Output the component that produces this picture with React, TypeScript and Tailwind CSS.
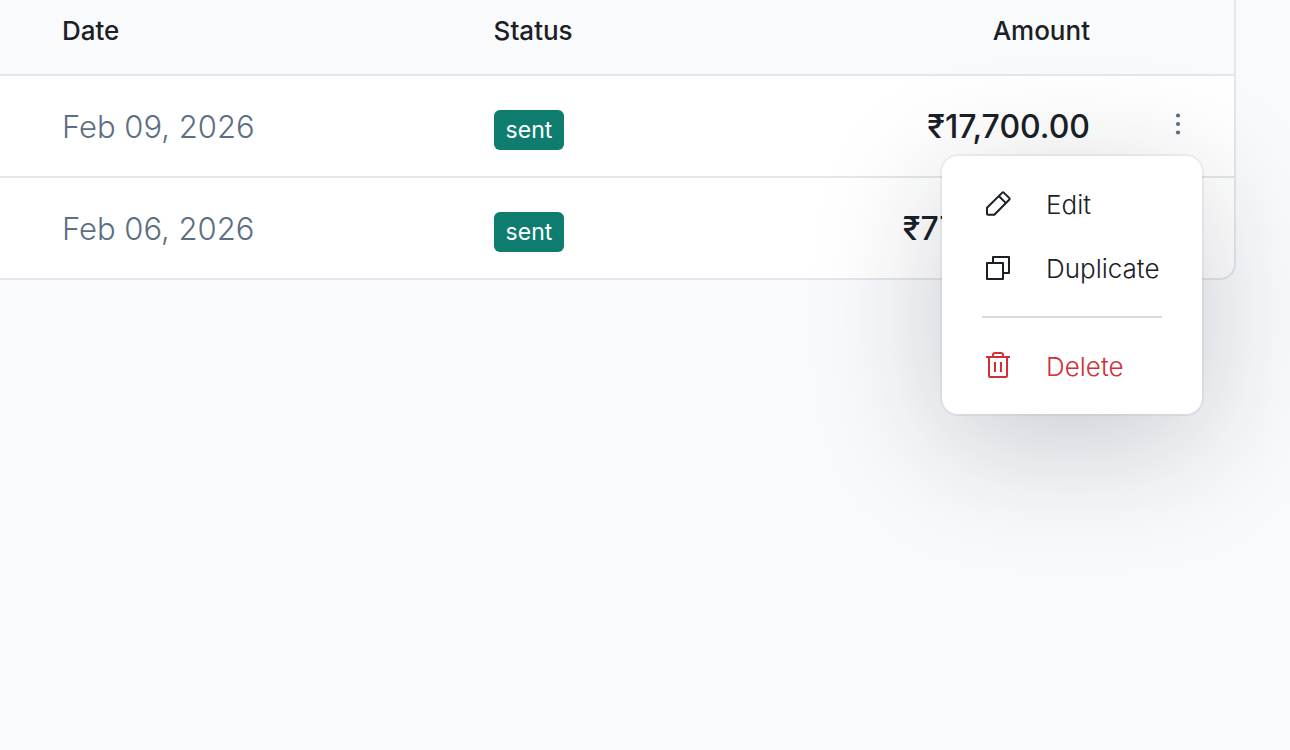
import React, { useState } from 'react';

interface Invoice {
  id: number;
  date: string;
  status: string;
  amount: string;
}

const invoices: Invoice[] = [
  { id: 1, date: 'Feb 09, 2026', status: 'sent', amount: '₹17,700.00' },
  { id: 2, date: 'Feb 06, 2026', status: 'sent', amount: '₹777,700.00' },
];

function PencilIcon() {
  return (
    <svg viewBox="0 0 32 32" className="size-8" fill="none" stroke="currentColor" strokeWidth="2" strokeLinejoin="round" aria-hidden="true">
      <path d="M5 19.7 20.3 4.6a1 1 0 0 1 1.4 0l5.7 5.5a1 1 0 0 1 0 1.4L12.3 26.7H6a1 1 0 0 1-1-1z" />
      <path d="m17 8.2 6.7 6.7" />
    </svg>
  );
}

function CopyIcon() {
  return (
    <svg viewBox="0 0 32 32" className="size-8" fill="none" stroke="currentColor" strokeWidth="2" strokeLinejoin="round" aria-hidden="true">
      <path d="M5 11h16v16H5z" />
      <path d="M11 11V5h16v16h-6" />
    </svg>
  );
}

function TrashIcon() {
  return (
    <svg viewBox="0 0 32 32" className="size-8" fill="none" stroke="currentColor" strokeWidth="2" strokeLinejoin="round" aria-hidden="true">
      <path d="M4 7h24M7 7v19a1 1 0 0 0 1 1h16a1 1 0 0 0 1-1V7" />
      <path d="M11 7V5a2 2 0 0 1 2-2h6a2 2 0 0 1 2 2v2M13 12v10M19 12v10" />
    </svg>
  );
}

interface MenuItemProps {
  icon: React.ReactNode;
  label: string;
  danger?: boolean;
  onClick: () => void;
}

function MenuItem({ icon, label, danger, onClick }: MenuItemProps) {
  return (
    <button
      type="button"
      role="menuitem"
      onClick={onClick}
      className={`flex h-16 w-full items-center gap-8 text-left text-[26px] font-light ${danger ? 'text-[#d32f38]' : 'text-[#1a2026]'}`}
    >
      {icon}
      <span className="pt-0.5">{label}</span>
    </button>
  );
}

function RowMenu({ open, onToggle }: { open: boolean; onToggle: () => void }) {
  return (
    <div className="relative ml-auto h-15 w-12">
      <button
        type="button"
        aria-label="Actions"
        aria-haspopup="menu"
        aria-expanded={open}
        onClick={onToggle}
        className="flex size-full items-center justify-center text-[#5c6f84]"
      >
        <svg viewBox="0 0 32 32" className="size-8" fill="currentColor" aria-hidden="true">
          <circle cx="16" cy="7.5" r="2.1" />
          <circle cx="16" cy="16" r="2.1" />
          <circle cx="16" cy="24.5" r="2.1" />
        </svg>
      </button>
      {open && (
        <div
          role="menu"
          className="absolute top-full right-0 z-10 mt-0.5 w-65 rounded-2xl bg-white px-10 py-4 shadow-[0_0_0_2px_rgba(24,28,50,0.05),0_30px_128px_rgba(24,28,50,0.21)]"
        >
          <MenuItem icon={<PencilIcon />} label="Edit" onClick={onToggle} />
          <MenuItem icon={<CopyIcon />} label="Duplicate" onClick={onToggle} />
          <hr className="my-4 border-t-2 border-[#d9dae0]" />
          <MenuItem icon={<TrashIcon />} label="Delete" danger onClick={onToggle} />
        </div>
      )}
    </div>
  );
}

export default function App() {
  const [openId, setOpenId] = useState<number | null>(1);

  return (
    <div className="min-h-screen overflow-hidden bg-[#f9fafc] pr-[54px] font-['Inter','Noto_Sans',sans-serif] text-[#1a2026]">
      <div className="rounded-br-2xl border-r-2 border-b-2 border-[#e5e6eb] bg-white">
        <table className="w-full table-fixed border-separate border-spacing-0">
          <thead>
            <tr className="h-19 bg-[#f9fafc] text-[26px] leading-8">
              <th scope="col" className="w-[40%] border-b-2 border-[#e5e6eb] pt-[15px] pb-[27px] pl-[62px] text-left font-medium">Date</th>
              <th scope="col" className="border-b-2 border-[#e5e6eb] pt-[15px] pb-[27px] text-left font-medium">Status</th>
              <th scope="col" className="border-b-2 border-[#e5e6eb] pt-[15px] pb-[27px] text-right font-medium">Amount</th>
              <th className="w-36 border-b-2 border-[#e5e6eb]" aria-label="Actions" />
            </tr>
          </thead>
          <tbody className="[&>tr+tr>td]:border-t-2 [&>tr+tr>td]:border-[#e5e6eb]">
            {invoices.map((invoice) => (
              <tr key={invoice.id} className="text-[32px] leading-10">
                <td className="pt-0.5 pl-[62px] text-[31px] font-light text-[#5c6f84]">{invoice.date}</td>
                <td className="pt-2">
                  <span className="flex h-10 w-fit items-center rounded-md bg-[#0e7c6f] px-3 text-[23px] text-white">{invoice.status}</span>
                </td>
                <td className="pt-0.5 text-right font-medium">{invoice.amount}</td>
                <td className="pt-4.5 pr-8 pb-5.5">
                  <RowMenu
                    open={openId === invoice.id}
                    onToggle={() => setOpenId(openId === invoice.id ? null : invoice.id)}
                  />
                </td>
              </tr>
            ))}
          </tbody>
        </table>
      </div>
    </div>
  );
}
